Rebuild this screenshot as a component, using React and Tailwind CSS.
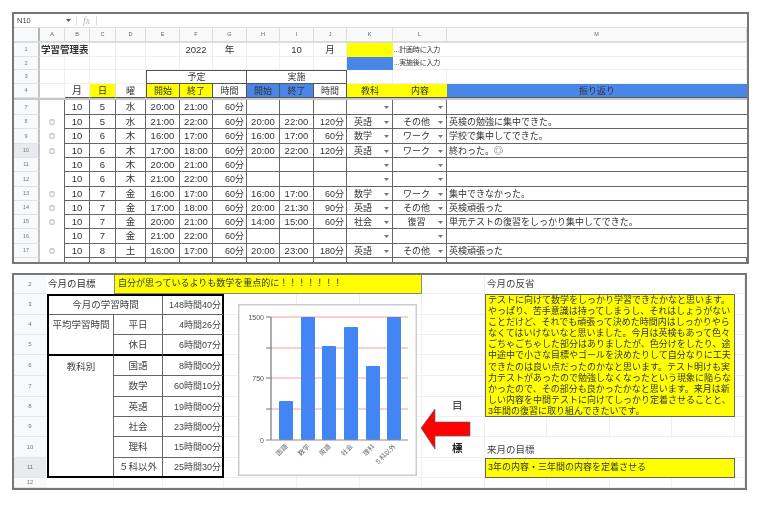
const topCols =
  "grid grid-cols-[26px_25px_25px_26px_30px_34px_33px_34px_33px_34px_33px_46px_54px_300px]";
const letters = ["A", "B", "C", "D", "E", "F", "G", "H", "I", "J", "K", "L", "M"];
const font = { fontFamily: '"Liberation Sans", "Noto Sans CJK JP", sans-serif' };

const rows = [
  [7, 15, "", 10, 5, "水", "20:00", "21:00", "60分", "", "", "", "", "", ""],
  [8, 14, "◎", 10, 5, "水", "21:00", "22:00", "60分", "20:00", "22:00", "120分", "英語", "その他", "英検の勉強に集中できた。"],
  [9, 15, "◎", 10, 6, "木", "16:00", "17:00", "60分", "16:00", "17:00", "60分", "数学", "ワーク", "学校で集中してできた。"],
  [10, 14, "◎", 10, 6, "木", "17:00", "18:00", "60分", "20:00", "22:00", "120分", "英語", "ワーク", "終わった。◎"],
  [11, 14, "", 10, 6, "木", "20:00", "21:00", "60分", "", "", "", "", "", ""],
  [12, 15, "", 10, 6, "木", "21:00", "22:00", "60分", "", "", "", "", "", ""],
  [13, 14, "◎", 10, 7, "金", "16:00", "17:00", "60分", "16:00", "17:00", "60分", "数学", "ワーク", "集中できなかった。"],
  [14, 14, "◎", 10, 7, "金", "17:00", "18:00", "60分", "20:00", "21:30", "90分", "英語", "その他", "英検頑張った"],
  [15, 14, "◎", 10, 7, "金", "20:00", "21:00", "60分", "14:00", "15:00", "60分", "社会", "復習", "単元テストの復習をしっかり集中してできた。"],
  [16, 15, "", 10, 7, "金", "21:00", "22:00", "60分", "", "", "", "", "", ""],
  [17, 14, "◎", 10, 8, "土", "16:00", "17:00", "60分", "20:00", "23:00", "180分", "英語", "その他", "英検頑張った"],
];

const reflection = [
  "テストに向けて数学をしっかり学習できたかなと思います。",
  "やっぱり、苦手意識は持ってしまうし、それはしょうがない",
  "ことだけど、それでも頑張って決めた時間内はしっかりやら",
  "なくてはいけないなと思いました。今月は英検もあって色々",
  "ごちゃごちゃした部分はありましたが、色分けをしたり、途",
  "中途中で小さな目標やゴールを決めたりして自分なりに工夫",
  "できたのは良い点だったのかなと思います。テスト明けも実",
  "力テストがあったので勉強しなくなったという現象に陥らな",
  "かったので、その部分も良かったかなと思います。来月は新",
  "しい内容を中間テストに向けてしっかり定着させることと、",
  "3年間の復習に取り組んできたいです。",
];

const bottomRows = [
  [2, 19], [3, 21], [4, 20], [5, 20], [6, 21], [7, 21], [8, 20], [9, 20], [10, 21], [11, 20], [12, 10],
];

const subjects = [
  ["国語", "8時間00分"],
  ["数学", "60時間10分"],
  ["英語", "19時間00分"],
  ["社会", "23時間00分"],
  ["理科", "15時間00分"],
  ["５科以外", "25時間30分"],
];

function Caret() {
  return (
    <svg width="5" height="3" viewBox="0 0 5 3" className="absolute right-[3px] top-[6px]">
      <path d="M0 0h5L2.5 3z" fill="#777" />
    </svg>
  );
}

function HeaderRow({ n, h, children }) {
  return (
    <div className={topCols} style={{ height: h }}>
      <div className="flex items-center justify-center bg-[#f8f9fa] border-r-2 border-r-[#c4c4c4] border-b border-b-[#e0e0e0] text-[5.5px] text-[#777]">
        {n}
      </div>
      {children}
    </div>
  );
}

function Plain({ children, className = "text-[9.5px]" }) {
  return (
    <div className={`flex items-center justify-center border-r border-b border-[#eeeeee] leading-[12px] text-[#333] whitespace-nowrap ${className}`}>
      {children}
    </div>
  );
}

function Band({ children, className = "" }) {
  return (
    <div className={`flex items-center justify-center border-r border-b border-[#555] leading-[12px] text-[9px] text-[#333] ${className}`}>
      {children}
    </div>
  );
}

function TopSheet() {
  return (
    <div className="w-[737px] h-[252px] border-2 border-[#777] overflow-hidden bg-white">
      {/* formula bar */}
      <div className="flex items-center h-[14px] border-b border-[#e0e0e0]">
        <span className="w-[52px] pl-[3px] text-[7.5px] text-[#444]">N10</span>
        <svg width="5" height="3" viewBox="0 0 5 3" className="mr-[5px]"><path d="M0 0h5L2.5 3z" fill="#555" /></svg>
        <span className="h-[9px] border-l border-[#ddd]" />
        <span className="mx-[6px] text-[10px] italic text-[#bbb]" style={{ fontFamily: '"Liberation Serif", serif' }}>fx</span>
        <span className="h-[9px] border-l border-[#ddd]" />
      </div>

      {/* column letters */}
      <div className={`${topCols} h-[15px] bg-[#f8f9fa] border-b-2 border-[#dcdcdc]`}>
        <div className="border-r-2 border-[#b5b5b5]" />
        {letters.map((c) => (
          <div key={c} className="flex items-center justify-center border-r border-[#dddddd] text-[5.5px] text-[#666]">
            {c}
          </div>
        ))}
      </div>

      <HeaderRow n={1} h={14}>
        <Plain className="justify-start! pl-[1px] font-bold text-[9.5px] border-r-0">学習管理表</Plain>
        <Plain />
        <Plain />
        <Plain />
        <Plain />
        <Plain>2022</Plain>
        <Plain>年</Plain>
        <Plain />
        <Plain>10</Plain>
        <Plain>月</Plain>
        <div className="bg-[#ffff00]" />
        <Plain className="justify-start! pl-[1px] text-[7px] tracking-[-0.2px] border-r-0">...計画時に入力</Plain>
        <Plain />
      </HeaderRow>
      <HeaderRow n={2} h={13}>
        <Plain /><Plain /><Plain /><Plain /><Plain /><Plain /><Plain /><Plain /><Plain /><Plain />
        <div className="bg-[#4a86e8]" />
        <Plain className="justify-start! pl-[1px] text-[7px] tracking-[-0.2px] border-r-0">...実施後に入力</Plain>
        <Plain />
      </HeaderRow>
      <HeaderRow n={3} h={14}>
        <Plain /><Plain /><Plain /><Plain />
        <Band className="col-span-3 border-t border-l">予定</Band>
        <Band className="col-span-3 border-t">実施</Band>
        <Plain /><Plain /><Plain />
      </HeaderRow>
      <HeaderRow n={4} h={14}>
        <Plain />
        <Plain className="border-b-[#555] text-[10px]">月</Plain>
        <Band className="bg-[#ffff00] border-r-[#ddd]">日</Band>
        <Plain className="border-b-[#555] text-[9px]">曜</Plain>
        <Band className="bg-[#ffff00] border-l">開始</Band>
        <Band className="bg-[#ffff00]">終了</Band>
        <Band>時間</Band>
        <Band className="bg-[#4a86e8]">開始</Band>
        <Band className="bg-[#4a86e8]">終了</Band>
        <Band>時間</Band>
        <Band className="bg-[#ffff00] border-r-0">教科</Band>
        <Band className="bg-[#ffff00] border-r-0">内容</Band>
        <Band className="bg-[#4a86e8] border-r-0">振り返り</Band>
      </HeaderRow>
      <div className="h-[2px] bg-[#c8c8c8]" />

      {rows.map((r) => {
        const [n, h, mark, month, day, week, s1, e1, t1, s2, e2, t2, subject, kind, note] = r;
        const cell = "flex items-center border-r border-b border-[#666] leading-[12px] text-[#333] whitespace-nowrap";
        return (
          <div key={n} className={topCols} style={{ height: h }}>
            <div className={`flex items-center justify-center border-r-2 border-r-[#c4c4c4] border-b border-b-[#e0e0e0] text-[5.5px] text-[#777] ${n === 10 ? "bg-[#e8eaed]" : "bg-[#f8f9fa]"}`}>
              {n}
            </div>
            <div className="flex items-center justify-center border-r border-[#666] text-[6px] text-[#555]">{mark}</div>
            <div className={`${cell} justify-center text-[9.5px]`}>{month}</div>
            <div className={`${cell} justify-center text-[9.5px]`}>{day}</div>
            <div className={`${cell} justify-center text-[9.5px]`}>{week}</div>
            <div className={`${cell} justify-center text-[9.5px]`}>{s1}</div>
            <div className={`${cell} justify-center text-[9.5px]`}>{e1}</div>
            <div className={`${cell} justify-end pr-[2px] text-[9px]`}>{t1}</div>
            <div className={`${cell} justify-center text-[9.5px]`}>{s2}</div>
            <div className={`${cell} justify-center text-[9.5px]`}>{e2}</div>
            <div className={`${cell} justify-end pr-[2px] text-[9px]`}>{t2}</div>
            <div className={`${cell} relative pl-[7px] text-[9px]`}>{subject}<Caret /></div>
            <div className={`${cell} relative justify-center pr-[6px] text-[9px]`}>{kind}<Caret /></div>
            <div className={`${cell} pl-[2px] text-[9px] border-r-0`}>{note}</div>
          </div>
        );
      })}
      {/* next row is only just in view, so only its lines show */}
      <div className={`${topCols} h-[4px]`}>
        <div className="border-r-2 border-[#c4c4c4] bg-[#f8f9fa]" />
        {letters.map((c) => (
          <div key={c} className="border-r border-[#666]" />
        ))}
      </div>
    </div>
  );
}

function Chart() {
  const bars = [
    [41, 97],
    [63, 13],
    [84, 42],
    [106, 23],
    [128, 62],
    [149, 13],
  ];
  const labels = ["国語", "数学", "英語", "社会", "理科", "５科以外"];
  return (
    <svg width="179" height="172" viewBox="0 0 179 172" className="absolute left-[224px] top-[29px]">
      <rect x="0.75" y="0.75" width="177.5" height="170.5" fill="#fff" stroke="#cccccc" strokeWidth="1.5" />
      {[13, 44, 74, 105].map((y) => (
        <line key={y} x1="33" x2="170" y1={y} y2={y} stroke="#ff9a9a" strokeWidth="1" />
      ))}
      {bars.map(([x, y]) => (
        <rect key={x} x={x} y={y} width="14" height={136 - y} rx="1" fill="#4285f4" />
      ))}
      <line x1="33" x2="33" y1="13" y2="136" stroke="#777" strokeWidth="1.2" />
      <line x1="28" x2="170" y1="136" y2="136" stroke="#888" strokeWidth="1" />
      {[13, 44, 74, 105].map((y) => (
        <line key={y} x1="28" x2="33" y1={y} y2={y} stroke="#777" strokeWidth="1" />
      ))}
      <text x="26" y="16" textAnchor="end" fontSize="7" fill="#555">1500</text>
      <text x="26" y="77" textAnchor="end" fontSize="7" fill="#555">750</text>
      <text x="26" y="139" textAnchor="end" fontSize="7" fill="#555">0</text>
      {labels.map((l, i) => (
        <text
          key={l}
          x={bars[i][0] + 9}
          y="143"
          textAnchor="end"
          fontSize="6.5"
          fill="#666"
          transform={`rotate(-45 ${bars[i][0] + 9} 143)`}
        >
          {l}
        </text>
      ))}
    </svg>
  );
}

function BottomSheet() {
  const line = "border-b border-[#666]";
  return (
    <div className="relative w-[735px] h-[217px] mt-[9px] border-2 border-[#777] overflow-hidden bg-white">
      <div className="grid grid-cols-[32px_68px_49px_61px_73px_63px_62px_63px_62px_63px_62px_63px_10px] grid-rows-[19px_21px_20px_20px_21px_21px_20px_20px_21px_20px_10px]">
        {/* row headers and faint sheet lines */}
        {bottomRows.map(([n], i) => (
          <div
            key={n}
            className={`flex items-center justify-center border-b border-[#e6e6e6] text-[6px] text-[#777] ${n === 11 ? "bg-[#e8eaed]" : "bg-[#f8f9fa]"}`}
            style={{ gridColumn: 1, gridRow: i + 1 }}
          >
            {n}
          </div>
        ))}
        {bottomRows.map(([n], i) =>
          Array.from({ length: 12 }).map((_, c) => (
            <div
              key={`${n}-${c}`}
              className="border-r border-b border-[#efefef]"
              style={{ gridColumn: c + 2, gridRow: i + 1 }}
            />
          ))
        )}

        {/* goal */}
        <div className="col-start-2 row-start-1 z-10 flex items-center pl-[2px] bg-white text-[9.5px] text-[#333]">今月の目標</div>
        <div className="col-start-3 col-span-5 row-start-1 z-10 flex items-center pl-[3px] bg-[#ffff00] border-l border-r border-b border-[#888] text-[9px] text-[#333] whitespace-nowrap">
          自分が思っているよりも数学を重点的に！！！！！！！
        </div>

        {/* study table */}
        <div className="col-start-2 col-span-3 row-start-2 row-span-9 z-10 ml-[1px] grid grid-cols-[65px_49px_60px] grid-rows-[19px_20px_21px_20px_21px_20px_20px_21px_18px] border-2 border-black bg-white leading-[12px] text-[9.5px] text-[#444]">
          <div className="col-span-2 flex items-center justify-center border-b border-r border-[#666]">今月の学習時間</div>
          <div className={`flex items-center justify-end pr-[2px] text-[9px] ${line}`}>148時間40分</div>
          <div className="row-span-2 flex justify-center pt-[4px] border-r border-b-2 border-[#666] border-b-black">平均学習時間</div>
          <div className={`flex items-center justify-center border-r border-[#666] ${line}`}>平日</div>
          <div className={`flex items-center justify-end pr-[2px] text-[9px] ${line}`}>4時間26分</div>
          <div className="flex items-center justify-center border-r border-[#666] border-b-2 border-b-black">休日</div>
          <div className="flex items-center justify-end pr-[2px] text-[9px] border-b-2 border-black">6時間07分</div>
          <div className="row-span-6 flex justify-center pt-[5px] border-r border-[#666]">教科別</div>
          {subjects.map(([name, time], i) => (
            <div key={name} className="contents">
              <div className={`flex items-center justify-center border-r border-[#666] ${i < 5 ? line : ""}`}>{name}</div>
              <div className={`flex items-center justify-end pr-[2px] text-[9px] ${i < 5 ? line : ""}`}>{time}</div>
            </div>
          ))}
        </div>

        {/* reflection */}
        <div className="col-start-9 col-span-4 row-start-1 z-10 flex items-center pl-[2px] bg-white text-[9.5px] text-[#444]">今月の反省</div>
        <div className="col-start-9 col-span-4 row-start-2 row-span-6 z-10 overflow-hidden pl-[2px] bg-[#ffff00] border border-[#666] text-[9px] leading-[11.1px] text-[#333] whitespace-nowrap">
          {reflection.map((l) => (
            <div key={l}>{l}</div>
          ))}
        </div>
        <div className="col-start-9 col-span-4 row-start-9 z-10 flex items-end pl-[2px] pb-[1px] bg-white text-[9.5px] text-[#444]">来月の目標</div>
        <div className="col-start-9 col-span-4 row-start-10 z-10 flex items-center pl-[2px] bg-[#ffff00] border border-[#666] text-[9px] text-[#333]">
          3年の内容・三年間の内容を定着させる
        </div>
      </div>

      <Chart />

      {/* arrow and label beside the chart */}
      <svg width="52" height="42" viewBox="0 0 52 42" className="absolute left-[406px] top-[133px]">
        <path d="M1 20 15 1v13h35v14H15v13z" fill="#ff0000" stroke="#666" strokeWidth="0.7" />
      </svg>
      <span className="absolute left-[438px] top-[123px] text-[10.5px] text-[#222]">目</span>
      <span className="absolute left-[438px] top-[166px] text-[10.5px] font-bold text-[#222]">標</span>
    </div>
  );
}

export default function App() {
  return (
    <div className="w-[768px] h-[510px] pt-[12px] pl-[12px] bg-white overflow-hidden blur-[0.5px]" style={font}>
      <TopSheet />
      <BottomSheet />
    </div>
  );
}
